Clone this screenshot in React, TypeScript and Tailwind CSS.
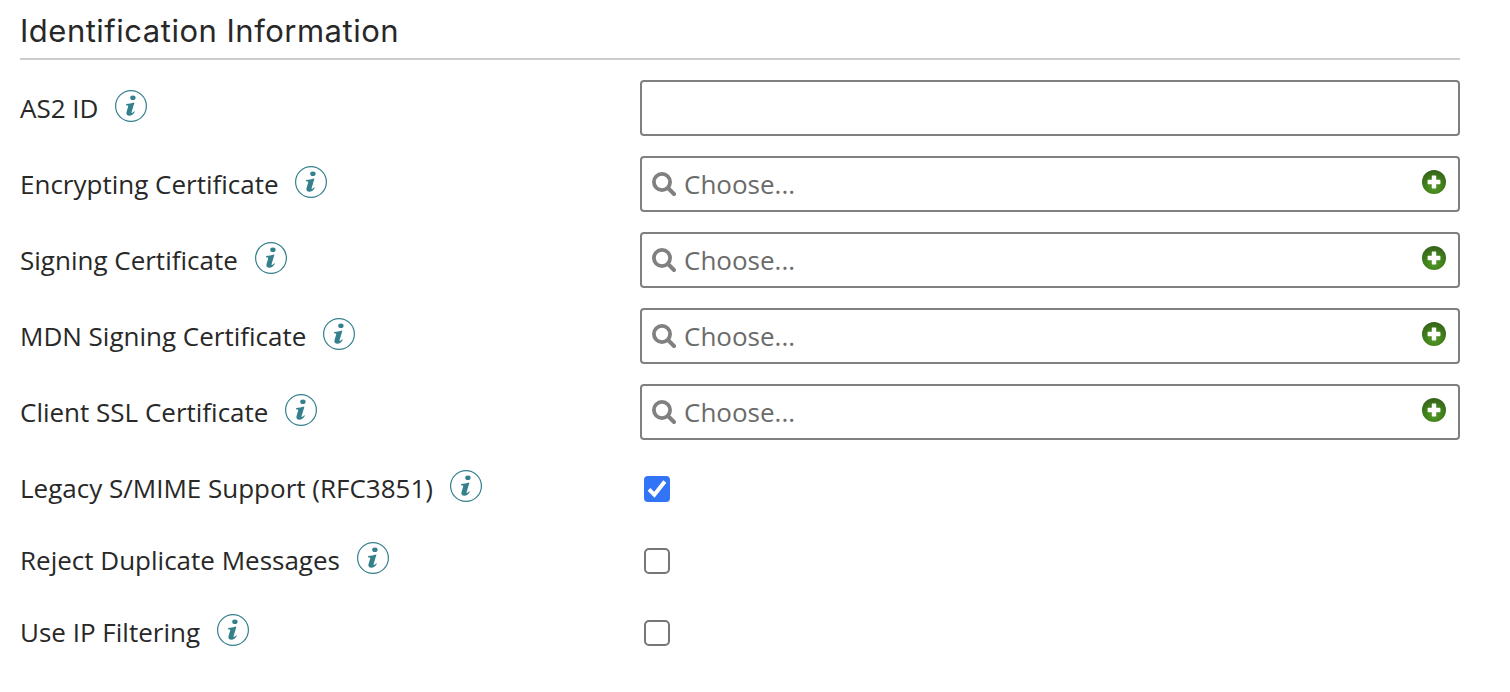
import { useState } from 'react';

const fields = [
  { label: 'AS2 ID', lookup: false },
  { label: 'Encrypting Certificate', lookup: true },
  { label: 'Signing Certificate', lookup: true },
  { label: 'MDN Signing Certificate', lookup: true },
  { label: 'Client SSL Certificate', lookup: true },
];

const options = [
  { label: 'Legacy S/MIME Support (RFC3851)', initial: true },
  { label: 'Reject Duplicate Messages', initial: false },
  { label: 'Use IP Filtering', initial: false },
];

function InfoIcon() {
  return (
    <svg className="mb-1 size-8 shrink-0 text-[#34808c]" viewBox="0 0 32 32" aria-hidden="true">
      <circle cx="16" cy="16" r="15.4" fill="none" stroke="currentColor" strokeWidth="1.2" />
      <ellipse cx="17.9" cy="7.8" rx="2.7" ry="2.3" fill="currentColor" />
      <path
        d="M11.2 14c2.8-.3 5.2-.8 7.9-1.6l.3.3-2.6 8.8c-.3 1-.3 1.5.1 1.5.6 0 1.4-.7 2.3-1.7l.7.5c-1.5 2.6-3.4 3.9-5.6 3.9-1.9 0-2.9-1-2.9-2.5 0-.6.1-1.1.3-1.7l1.4-4.7c.3-1 0-1.3-.6-1.4l-1.5-.2z"
        fill="currentColor"
      />
    </svg>
  );
}

function SearchIcon() {
  return (
    <svg className="size-6 shrink-0 text-[#808080]" viewBox="0 0 24 24" aria-hidden="true">
      <circle cx="10" cy="10" r="8.1" fill="none" stroke="currentColor" strokeWidth="3.8" />
      <path d="M16 16l6 6" stroke="currentColor" strokeWidth="4" strokeLinecap="round" />
    </svg>
  );
}

function AddIcon() {
  return (
    <svg className="block size-6" viewBox="0 0 24 24" aria-hidden="true">
      <defs>
        <radialGradient id="add-fill" cx="0.5" cy="0.7" r="0.7">
          <stop offset="0" stopColor="#559a28" />
          <stop offset="0.55" stopColor="#3f7f1b" />
          <stop offset="1" stopColor="#35601b" />
        </radialGradient>
      </defs>
      <circle cx="12" cy="12" r="12" fill="url(#add-fill)" />
      <path
        d="M10.4 6.2h3.2v4.2h4.2v3.2h-4.2v4.2h-3.2v-4.2H6.2v-3.2h4.2z"
        fill="#fff"
        stroke="#fff"
        strokeWidth="1.2"
        strokeLinejoin="round"
      />
    </svg>
  );
}

function Label({ text }: { text: string }) {
  return (
    <div className="flex w-[620px] shrink-0 items-center gap-[16.8px]">
      <span className="whitespace-nowrap">{text}</span>
      <InfoIcon />
    </div>
  );
}

function Option({ label, initial }: { label: string; initial: boolean }) {
  const [checked, setChecked] = useState(initial);
  return (
    <div className="flex h-[72px] items-center">
      <Label text={label} />
      <button
        type="button"
        role="checkbox"
        aria-checked={checked}
        aria-label={label}
        onClick={() => setChecked(!checked)}
        className={
          checked
            ? 'mt-0.5 ml-1 size-[26px] rounded-[4px] bg-[#3174f6]'
            : 'mt-0.5 ml-1 size-[26px] rounded-[5px] border-2 border-[#767676] bg-white'
        }
      >
        {checked && (
          <svg className="block size-[26px]" viewBox="0 0 26 26" aria-hidden="true">
            <path d="M5 13.4l5.4 5.4L20.8 5.5" fill="none" stroke="#fff" strokeWidth="3.9" />
          </svg>
        )}
      </button>
    </div>
  );
}

export default function App() {
  return (
    <main className="h-[692px] w-[1510px] bg-white px-5 font-['Open_Sans',sans-serif] text-[26px] leading-9 text-[#282828]">
      <h1 className="flex h-[60px] w-[1440px] items-center border-b-2 border-[#cccccc] pt-1 font-['Inter',sans-serif] text-[31px] font-normal tracking-[0.5px] whitespace-nowrap">
        Identification Information
      </h1>
      <div className="flex w-[1440px] flex-col gap-5 pt-5">
        {fields.map(({ label, lookup }) => (
          <div key={label} className="flex h-14">
            <Label text={label} />
            <div className="flex h-14 w-[820px] items-center rounded-[4px] border-2 border-[#808080] bg-white pr-3 pl-2.5">
              {lookup ? (
                <>
                  <SearchIcon />
                  <input
                    aria-label={label}
                    placeholder="Choose..."
                    className="ml-2 h-full min-w-0 flex-1 outline-none placeholder:text-[#6b6b6b]"
                  />
                  <button type="button" aria-label="Add" className="mb-1">
                    <AddIcon />
                  </button>
                </>
              ) : (
                <input aria-label={label} className="h-full w-full outline-none" />
              )}
            </div>
          </div>
        ))}
      </div>
      <div className="pt-3">
        {options.map((o) => (
          <Option key={o.label} {...o} />
        ))}
      </div>
    </main>
  );
}
